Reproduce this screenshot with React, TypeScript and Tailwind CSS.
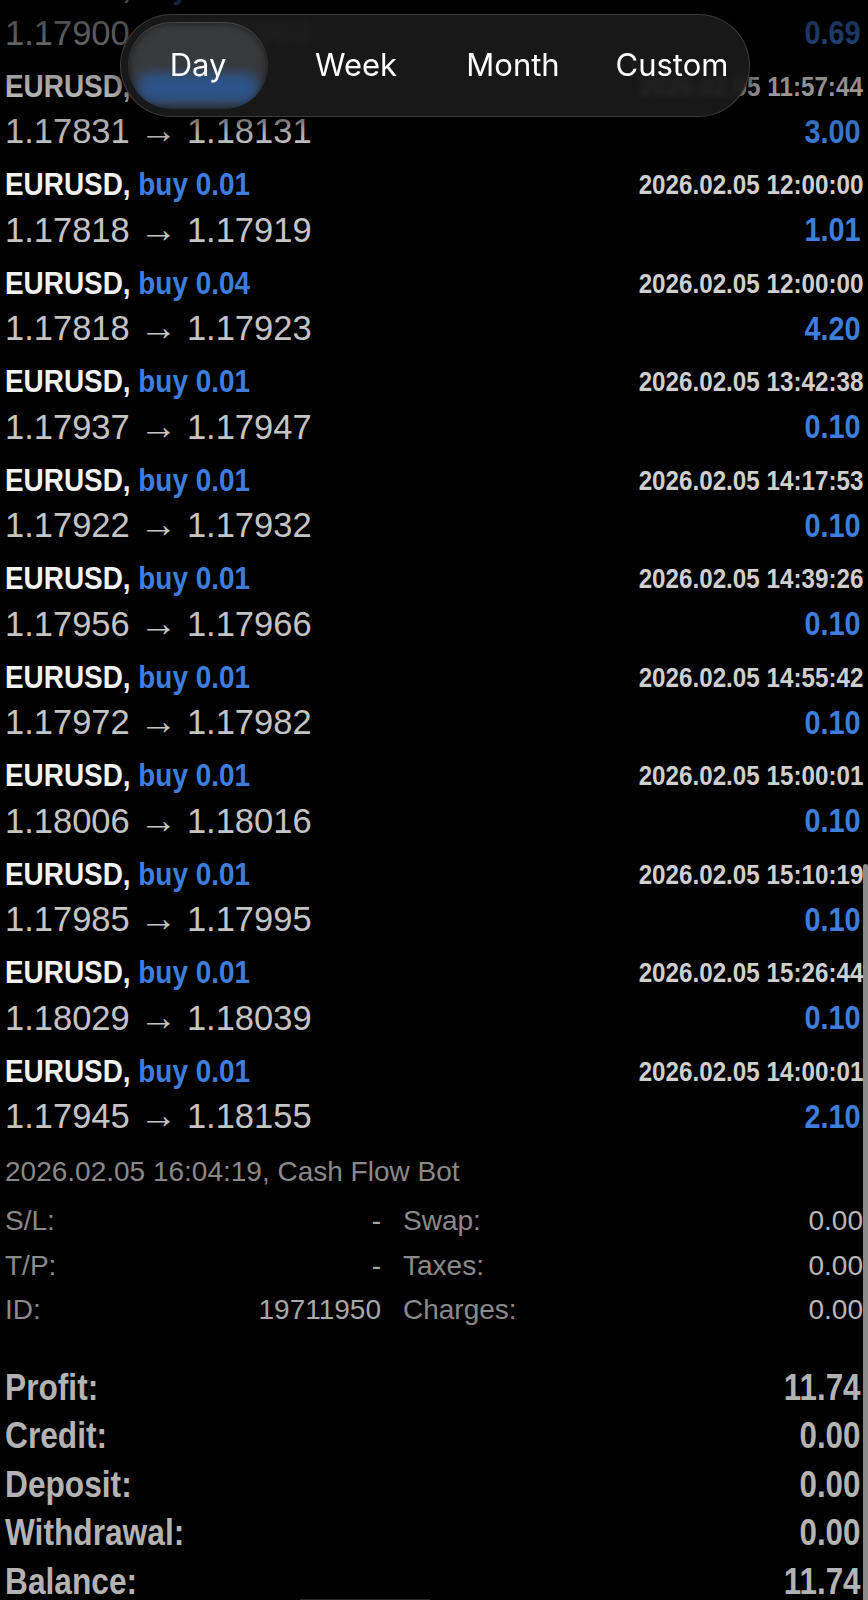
import React from "react";

type Row = { lot: string; date: string; open: string; close: string; profit: string };

const rows: Row[] = [
  { lot: "0.01", date: "2026.02.05 11:49:06", open: "1.17900", close: "1.17969", profit: "0.69" },
  { lot: "0.01", date: "2026.02.05 11:57:44", open: "1.17831", close: "1.18131", profit: "3.00" },
  { lot: "0.01", date: "2026.02.05 12:00:00", open: "1.17818", close: "1.17919", profit: "1.01" },
  { lot: "0.04", date: "2026.02.05 12:00:00", open: "1.17818", close: "1.17923", profit: "4.20" },
  { lot: "0.01", date: "2026.02.05 13:42:38", open: "1.17937", close: "1.17947", profit: "0.10" },
  { lot: "0.01", date: "2026.02.05 14:17:53", open: "1.17922", close: "1.17932", profit: "0.10" },
  { lot: "0.01", date: "2026.02.05 14:39:26", open: "1.17956", close: "1.17966", profit: "0.10" },
  { lot: "0.01", date: "2026.02.05 14:55:42", open: "1.17972", close: "1.17982", profit: "0.10" },
  { lot: "0.01", date: "2026.02.05 15:00:01", open: "1.18006", close: "1.18016", profit: "0.10" },
  { lot: "0.01", date: "2026.02.05 15:10:19", open: "1.17985", close: "1.17995", profit: "0.10" },
  { lot: "0.01", date: "2026.02.05 15:26:44", open: "1.18029", close: "1.18039", profit: "0.10" },
  { lot: "0.01", date: "2026.02.05 14:00:01", open: "1.17945", close: "1.18155", profit: "2.10" },
];

const bold = "font-['Liberation_Sans',Arial,sans-serif] font-bold";
const regular = "font-['Liberation_Sans',Arial,sans-serif]";

function TradeRow({ r }: { r: Row }) {
  return (
    <div className="flex flex-col pb-[10.5px]">
      <div className={`flex h-[44px] items-center justify-between leading-[44px] ${bold}`}>
        <span className="inline-block origin-left scale-x-[0.9] whitespace-nowrap text-[31px]">
          <span className="text-[#f2f2f2]">EURUSD,</span>{" "}
          <span className="text-[#3d7ddc]">buy {r.lot}</span>
        </span>
        <span className="inline-block origin-right scale-x-[0.88] whitespace-nowrap text-[27.5px] text-[#cfcfcf]">
          {r.date}
        </span>
      </div>
      <div className="flex h-[44px] items-center justify-between leading-[44px]">
        <div className={`${regular} whitespace-nowrap text-[34.5px] text-[#c4c4c4]`}>
          {r.open} <span className="text-[38px]">→</span> {r.close}
        </div>
        <span className={`${bold} inline-block origin-right scale-x-[0.85] pr-[3px] text-[34px] text-[#3d7ddc]`}>
          {r.profit}
        </span>
      </div>
    </div>
  );
}

function DetailRow({ l1, v1, l2, v2 }: { l1: string; v1: string; l2: string; v2: string }) {
  return (
    <div className={`flex h-[44.5px] items-center leading-[44.5px] ${regular} text-[28px]`}>
      <div className="flex w-[376px] justify-between">
        <span className="text-[#8a8a8a]">{l1}</span>
        <span className="text-[#a8a8a8]">{v1}</span>
      </div>
      <div className="ml-[22px] flex flex-1 justify-between">
        <span className="text-[#8a8a8a]">{l2}</span>
        <span className="text-[#b8b8b8]">{v2}</span>
      </div>
    </div>
  );
}

function SumRow({ label, value }: { label: string; value: string }) {
  return (
    <div className={`flex h-[48.5px] items-center justify-between leading-[48.5px] ${bold} text-[36px] text-[#b3b3b3]`}>
      <span className="inline-block origin-left scale-x-[0.88]">{label}</span>
      <span className="inline-block origin-right scale-x-[0.87] pr-[3px]">{value}</span>
    </div>
  );
}

export default function App() {
  return (
    <div className="relative h-[1600px] w-[868px] overflow-hidden bg-black">
      <div className="mt-[-34px] px-[5px]">
        {rows.map((r, i) => (
          <TradeRow key={i} r={r} />
        ))}
        <div className={`mt-[2px] h-[44px] leading-[44px] ${regular} text-[28px] text-[#898989]`}>
          2026.02.05 16:04:19, Cash Flow Bot
        </div>
        <div className="mt-[5px]">
          <DetailRow l1="S/L:" v1="-" l2="Swap:" v2="0.00" />
          <DetailRow l1="T/P:" v1="-" l2="Taxes:" v2="0.00" />
          <DetailRow l1="ID:" v1="19711950" l2="Charges:" v2="0.00" />
        </div>
        <div className="mt-[31px]">
          <SumRow label="Profit:" value="11.74" />
          <SumRow label="Credit:" value="0.00" />
          <SumRow label="Deposit:" value="0.00" />
          <SumRow label="Withdrawal:" value="0.00" />
          <SumRow label="Balance:" value="11.74" />
        </div>
      </div>

      {/* top fade */}
      <div className="pointer-events-none absolute inset-x-0 top-0 h-[150px] bg-linear-to-b from-black/70 to-transparent" />

      {/* segmented control */}
      <div className="absolute left-[120px] top-[14px] flex h-[103px] w-[630px] items-center rounded-full border border-[#4a4a4a]/70 bg-[#1b1b1b]/90 pl-[7px] shadow-[0_4px_20px_rgba(0,0,0,0.6)] backdrop-blur-[3px] font-['Inter','Liberation_Sans',sans-serif] text-[31px] text-white">
        <div className="relative flex h-[87px] w-[140px] shrink-0 items-center justify-center overflow-hidden rounded-full bg-[#393a3d] shadow-[inset_0_1px_1px_rgba(255,255,255,0.15),inset_0_0_8px_rgba(0,0,0,0.7)]">
          <div className="absolute bottom-[6px] left-[10px] right-[10px] h-[30px] rounded-xl bg-[#2a5898]/85 blur-[6px]" />
          <span className="relative">Day</span>
        </div>
        <div className="flex w-[176px] shrink-0 justify-center">Week</div>
        <div className="flex w-[138px] shrink-0 justify-center">Month</div>
        <div className="flex w-[180px] shrink-0 justify-center">Custom</div>
      </div>

      {/* scrollbar */}
      <div className="absolute right-0 top-[864px] h-[760px] w-[5px] rounded-t-full bg-[#8a8a8a]" />

      {/* home indicator hint */}
      <div className="absolute bottom-0 left-[300px] h-[1px] w-[130px] bg-[#2a2a2a]" />
    </div>
  );
}
